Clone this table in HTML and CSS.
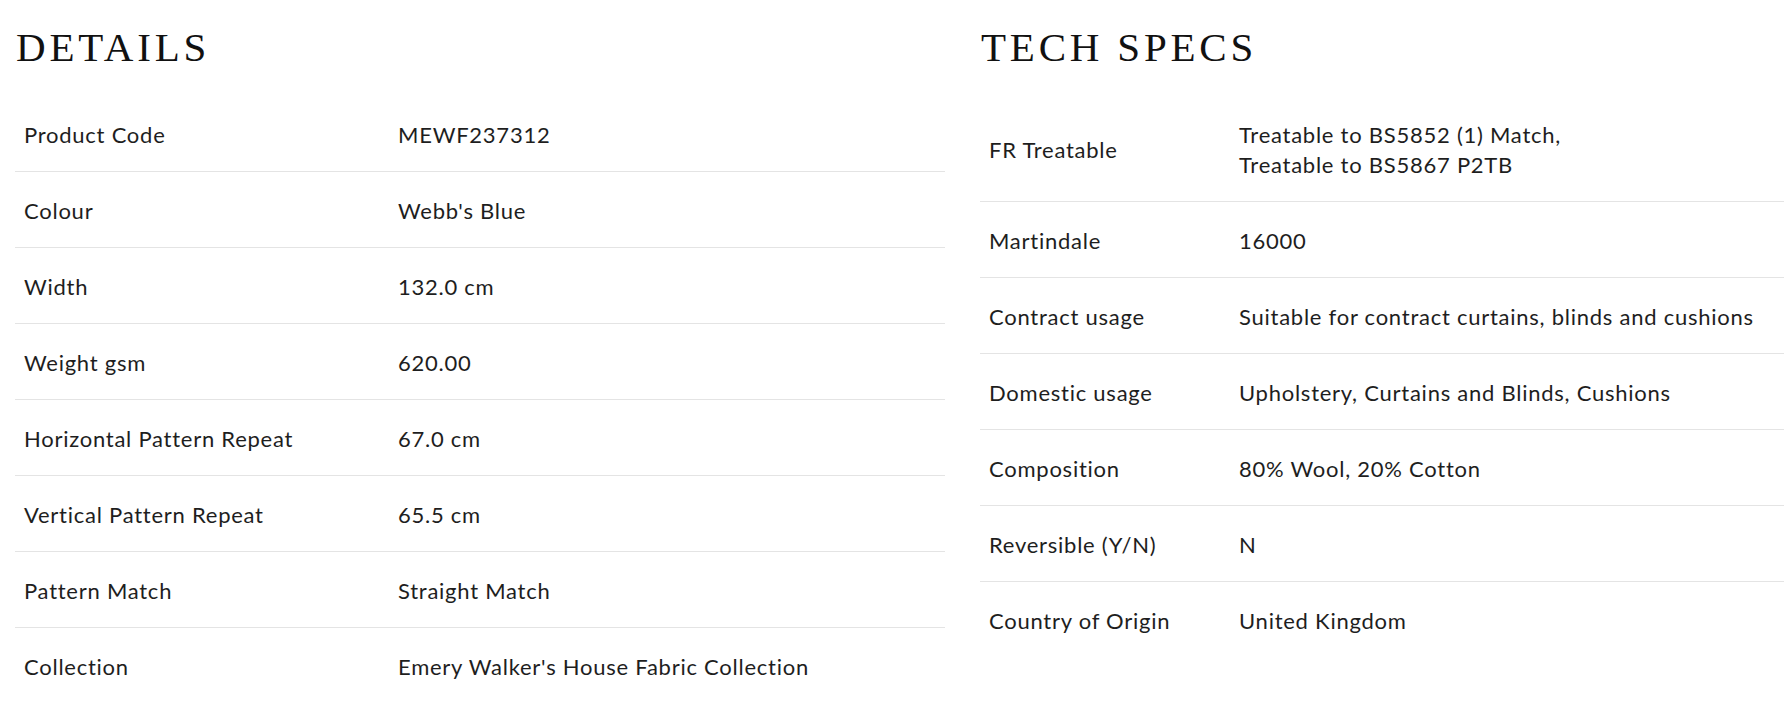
FILE: index.html
```html
<!DOCTYPE html>
<html lang="en">
<head>
<meta charset="utf-8">
<title>Details &amp; Tech Specs</title>
<link rel="stylesheet" href="styles.css">
</head>
<body>
<main class="page">
  <section class="panel details">
    <h2 class="heading">DETAILS</h2>
    <div class="table">
      <div class="row"><div class="label">Product Code</div><div class="value">MEWF237312</div></div>
      <div class="row"><div class="label">Colour</div><div class="value">Webb's Blue</div></div>
      <div class="row"><div class="label">Width</div><div class="value">132.0 cm</div></div>
      <div class="row"><div class="label">Weight gsm</div><div class="value">620.00</div></div>
      <div class="row"><div class="label">Horizontal Pattern Repeat</div><div class="value">67.0 cm</div></div>
      <div class="row"><div class="label">Vertical Pattern Repeat</div><div class="value">65.5 cm</div></div>
      <div class="row"><div class="label">Pattern Match</div><div class="value">Straight Match</div></div>
      <div class="row"><div class="label">Collection</div><div class="value">Emery Walker's House Fabric Collection</div></div>
    </div>
  </section>
  <section class="panel specs">
    <h2 class="heading">TECH SPECS</h2>
    <div class="table">
      <div class="row"><div class="label">FR Treatable</div><div class="value">Treatable to BS5852 (1) Match,<br>Treatable to BS5867 P2TB</div></div>
      <div class="row"><div class="label">Martindale</div><div class="value">16000</div></div>
      <div class="row"><div class="label">Contract usage</div><div class="value">Suitable for contract curtains, blinds and cushions</div></div>
      <div class="row"><div class="label">Domestic usage</div><div class="value">Upholstery, Curtains and Blinds, Cushions</div></div>
      <div class="row"><div class="label">Composition</div><div class="value">80% Wool, 20% Cotton</div></div>
      <div class="row"><div class="label">Reversible (Y/N)</div><div class="value">N</div></div>
      <div class="row"><div class="label">Country of Origin</div><div class="value">United Kingdom</div></div>
    </div>
  </section>
</main>
</body>
</html>
```

FILE: styles.css
```css
html, body {
  margin: 0;
  padding: 0;
  background: #ffffff;
}

body {
  font-family: Lato, "Noto Sans", sans-serif;
  color: #1e1e1e;
  overflow: hidden;
}

.page {
  display: grid;
  grid-template-columns: 930px 1fr;
  column-gap: 35px;
  padding-left: 15px;
}

.panel {
  min-width: 0;
}

.heading {
  font-family: "Liberation Serif", "Times New Roman", serif;
  font-weight: 400;
  font-size: 41px;
  line-height: 42px;
  letter-spacing: 3.8px;
  color: #111111;
  margin: 26px 0 28px 1px;
}

.row {
  display: grid;
  grid-template-columns: 374px 1fr;
  align-items: center;
  padding: 24px 0 21px 9px;
  border-bottom: 1px solid #e4e4e4;
  font-size: 22px;
  line-height: 30px;
  letter-spacing: 0.75px;
}

.row:last-child {
  border-bottom: none;
}

.specs .row {
  grid-template-columns: 250px 1fr;
}

.value {
  white-space: nowrap;
}
```
